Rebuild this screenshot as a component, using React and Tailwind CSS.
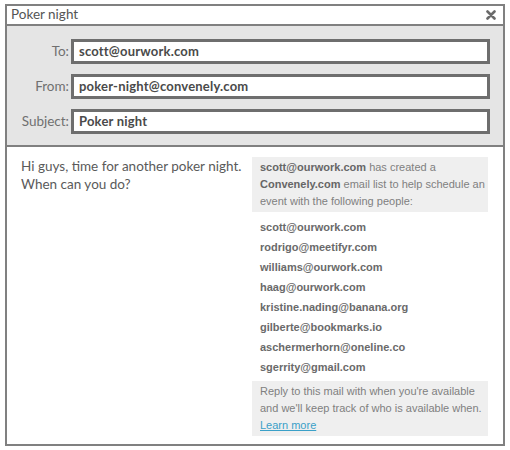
import React from "react";

const emails = [
  "scott@ourwork.com",
  "rodrigo@meetifyr.com",
  "williams@ourwork.com",
  "haag@ourwork.com",
  "kristine.nading@banana.org",
  "gilberte@bookmarks.io",
  "aschermerhorn@oneline.co",
  "sgerrity@gmail.com",
];

function Field({ label, value }) {
  return (
    <div className="flex items-center">
      <div className="w-[64px] pr-[2px] text-right text-[13.5px] text-[#707070] font-['Lato',sans-serif]">{label}</div>
      <div className="flex-1 h-[25px] border-[3px] border-[#6e6e6e] bg-white flex items-center pl-[5px] text-[13px] font-bold tracking-[0.2px] text-[#4a4a4a] font-['Lato',sans-serif]">
        {value}
      </div>
    </div>
  );
}

export default function App() {
  return (
    <div className="w-[510px] h-[450px] bg-white pt-[4px] pl-[5px]">
      <div className="w-[500px] h-[442px] border-2 border-[#808080] flex flex-col bg-white">
        <div className="h-[20px] border-b-2 border-[#808080] flex items-center justify-between pl-[4px] pr-[7px]">
          <span className="text-[13.5px] text-[#555] font-['Lato',sans-serif] leading-none">Poker night</span>
          <svg width="10" height="10" viewBox="0 0 10 10">
            <path d="M1.5 1.5 L8.5 8.5 M8.5 1.5 L1.5 8.5" stroke="#6a6a6a" strokeWidth="2.6" strokeLinecap="round" />
          </svg>
        </div>
        <div className="bg-[#e5e5e5] border-b-2 border-[#808080] pt-[13px] pb-[11px] pr-[13px] flex flex-col gap-[10px]">
          <Field label="To:" value="scott@ourwork.com" />
          <Field label="From:" value="poker-night@convenely.com" />
          <Field label="Subject:" value="Poker night" />
        </div>
        <div className="flex-1 flex pt-[10px] pl-[14px] pr-[15px]">
          <div className="flex-1 text-[13.5px] leading-[18px] text-[#5a5a5a] font-['Lato',sans-serif]">
            Hi guys, time for another poker night.
            <br />
            When can you do?
          </div>
          <div className="w-[236px] font-['Liberation_Sans',Arial,sans-serif] text-[11px]">
            <div className="bg-[#efefef] pl-[8px] pr-[2px] py-[2px] leading-[17px] text-[#808080]">
              <b className="text-[#666]">scott@ourwork.com</b> has created a{" "}
              <b className="text-[#666]">Convenely.com</b> email list to help schedule an event with the following people:
            </div>
            <div className="mt-[5px] mb-[4px] pl-[8px]">
              {emails.map((e) => (
                <div key={e} className="leading-[20px] font-bold text-[#6a6a6a]">{e}</div>
              ))}
            </div>
            <div className="bg-[#efefef] pl-[8px] pr-[2px] py-[2px] leading-[17px] text-[#808080]">
              Reply to this mail with when you're available and we'll keep track of who is available when.
              <br />
              <span className="text-[#3aa0c8] underline">Learn more</span>
            </div>
          </div>
        </div>
      </div>
    </div>
  );
}
